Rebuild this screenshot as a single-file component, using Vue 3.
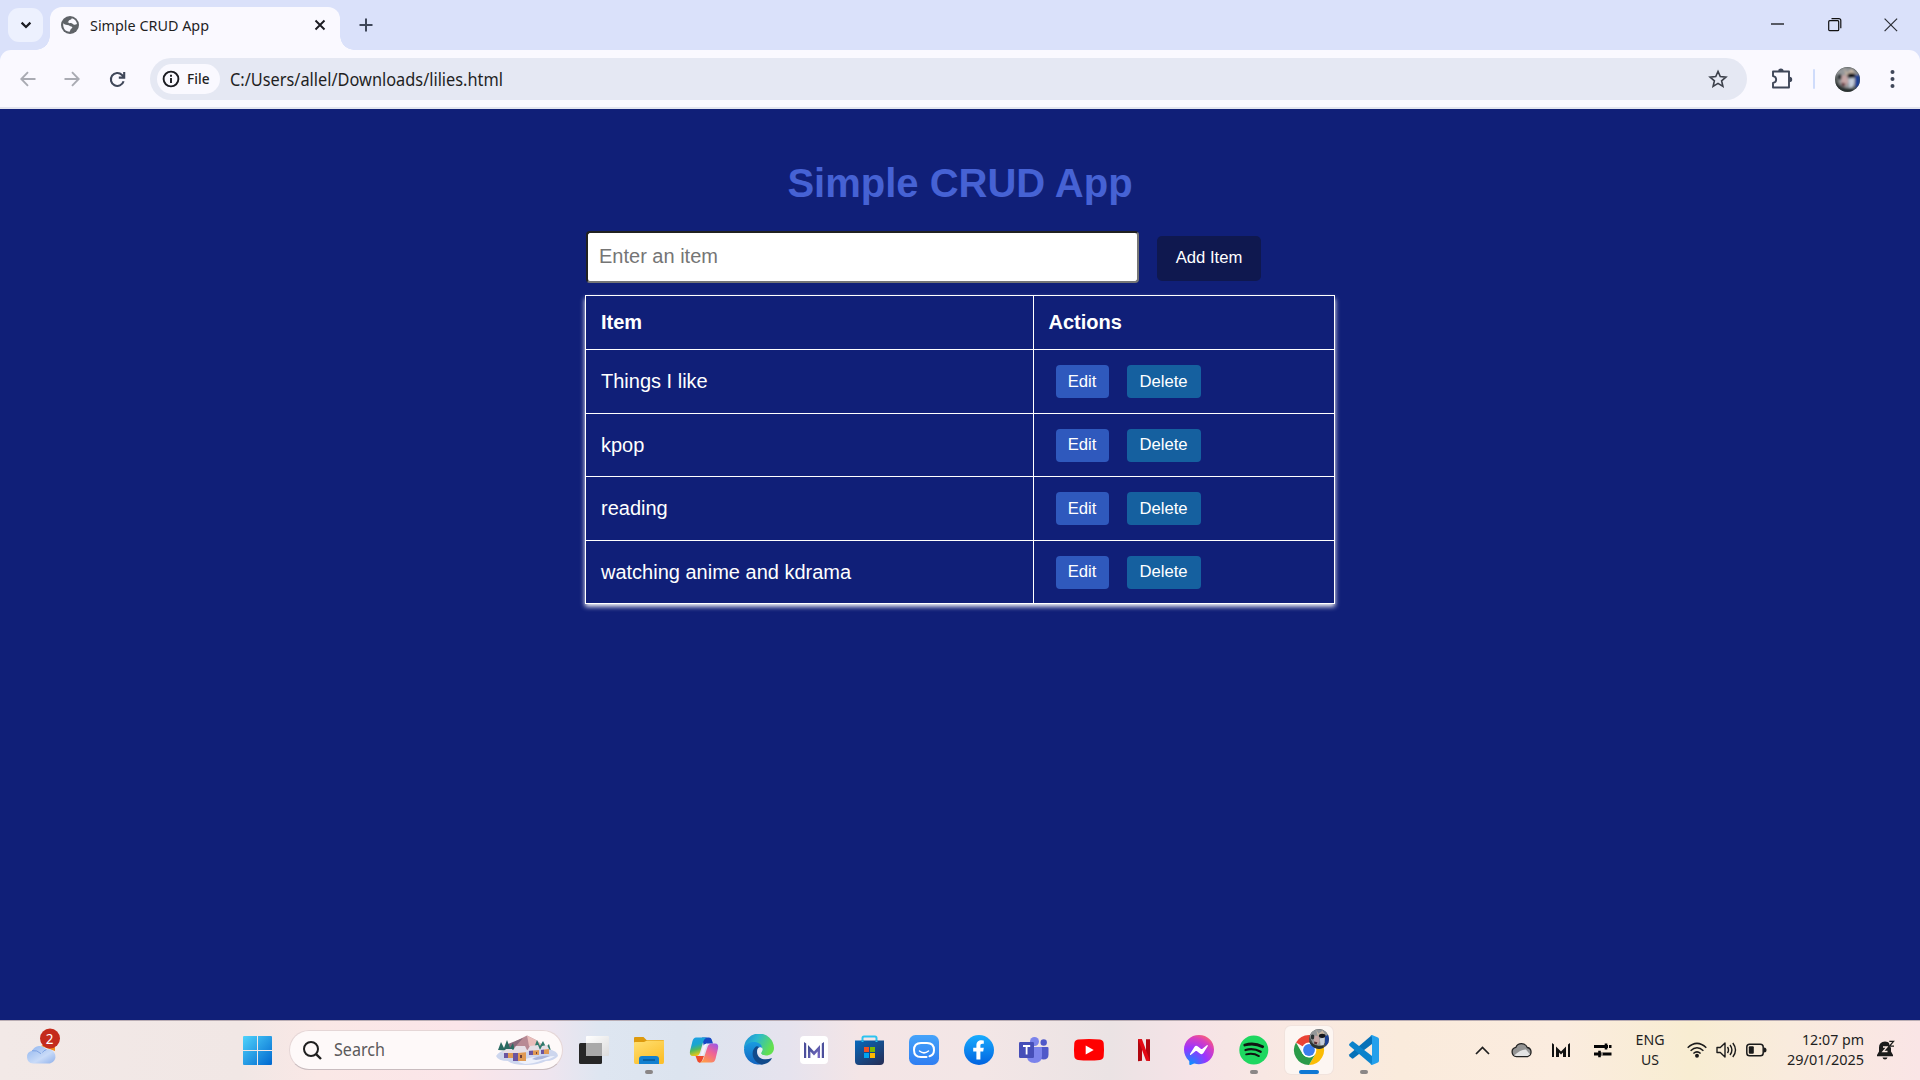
<script setup>
const rows = ['Things I like', 'kpop', 'reading', 'watching anime and kdrama']
</script>

<template>
  <div class="screen">
    <header class="tabstrip">
      <button class="tabsearch">
        <svg width="12" height="8" viewBox="0 0 12 8"><path d="M1.600 1.600 6 6l4.400-4.400" fill="none" stroke="#1b1c22" stroke-width="2.200" /></svg>
      </button>
      <div class="tab">
        <svg class="favicon" width="18" height="18" viewBox="0 0 18 18">
          <circle cx="9" cy="9" r="9" fill="#5f6368" />
          <path d="M2.200 7.200c1.700 1.700 3.600 1.500 5.400 2 .9.300 1.300 1.200 2.600 1.200 1.400.1 1.500 1.500.3 2-1 .4-1.100 1.900-1.900 3.300C4.500 15.600 1.800 12.500 2.200 7.200ZM10.800 2.200c-.4 1.300-1 1.500-2.200 1.800-1.200.4-.7 1.800-1.900 2 .2 1.200 1.300 1.200 2.900 1.100 1.800-.1 2.200 1.400 3.400 1.700 1.100.2 2-.3 3-.7C15.600 5 13.600 2.900 10.800 2.200Z" fill="#faf9ff" />
        </svg>
        <svg class="tabtitle" width="140" height="26"><text x="0" y="19" textLength="119" lengthAdjust="spacingAndGlyphs">Simple CRUD App</text></svg>
        <svg class="tabclose" width="12" height="12" viewBox="0 0 12 12"><path d="M1.500 1.500l9 9M10.500 1.500l-9 9" stroke="#1b1c22" stroke-width="1.900" /></svg>
      </div>
      <svg class="newtab" width="14" height="14" viewBox="0 0 14 14"><path d="M7 .5v13M.5 7h13" stroke="#3f4759" stroke-width="2" /></svg>
      <div class="winctl">
        <svg width="14" height="14" viewBox="0 0 14 14"><path d="M0 6h13" stroke="#000" stroke-width="1.200" /></svg>
        <svg width="14" height="14" viewBox="0 0 14 14" fill="none" stroke="#111"><rect x=".7" y="2.700" width="10" height="10" rx="1" stroke-width="1.200" /><path d="M3.500.6h7.300q2 0 2 2v7.600" stroke-width="1.200" /></svg>
        <svg width="14" height="14" viewBox="0 0 14 14"><path d="M.6.6l12.500 12.500M13.100.6.6 13.100" stroke="#2b2d35" stroke-width="1.200" /></svg>
      </div>
    </header>

    <div class="toolbar">
      <svg class="back" width="16" height="16" viewBox="0 0 16 16" fill="none" stroke="#a9abb3" stroke-width="1.900"><path d="M15.500 8H1.500M8 1.200 1.300 8 8 14.800" /></svg>
      <svg class="fwd" width="16" height="16" viewBox="0 0 16 16" fill="none" stroke="#a9abb3" stroke-width="1.900"><path d="M.5 8h14M8 1.200 14.700 8 8 14.800" /></svg>
      <svg class="reload" width="17" height="17" viewBox="0 0 17 17" fill="none" stroke="#3f4759" stroke-width="2.100"><path d="M14.600 10.300A6.500 6.500 0 1 1 13 3.900l2 2.100M15.200 1v5.600H9.800" /></svg>
      <div class="omnibox">
        <div class="chip">
          <svg width="18" height="18" viewBox="0 0 18 18"><circle cx="9" cy="9" r="7.400" fill="none" stroke="#1b1c22" stroke-width="1.900" /><path d="M9 8v5M9 4.800v2" stroke="#1b1c22" stroke-width="1.900" /></svg>
          <svg width="26" height="24"><text class="filetext" x="0" y="17" textLength="22.500" lengthAdjust="spacingAndGlyphs">File</text></svg>
        </div>
        <svg class="url" width="300" height="30"><text x="0" y="22" textLength="273" lengthAdjust="spacingAndGlyphs">C:/Users/allel/Downloads/lilies.html</text></svg>
        <svg class="star" width="20" height="20" viewBox="0 0 20 20"><path d="M10 2.400l2.250 5.200 5.650.5-4.300 3.700 1.300 5.550L10 14.400l-4.900 2.950 1.300-5.550L2.100 8.100l5.650-.5Z" fill="none" stroke="#3c404b" stroke-width="1.600" /></svg>
      </div>
      <svg class="puzzle" width="22" height="22" viewBox="0 0 22 22"><path d="M2 3.500h16v16H2v-4.600c4.200-.6 4.200-6.200 0-6.800Z" fill="none" stroke="#3f4759" stroke-width="1.900" stroke-linejoin="round" /><path d="M7.200 3.200a2.700 2.700 0 0 1 5.400 0ZM18.500 8.700a2.700 2.700 0 0 1 0 5.400Z" fill="#3f4759" /></svg>
      <i class="sep"></i>
      <svg class="avatar" width="25" height="25" viewBox="0 0 25 25">
        <defs><clipPath id="av"><circle cx="12.500" cy="12.500" r="12.500" /></clipPath>
          <filter id="soft"><feGaussianBlur stdDeviation=".8" /></filter></defs>
        <g clip-path="url(#av)">
          <rect width="25" height="25" fill="#4a504f" />
          <g id="catface" filter="url(#soft)">
            <path d="M1 4 9 0l9 1 6 6-1 8-5 4-6 3-7-4-4-8Z" fill="#94979a" />
            <path d="M9 1l3 5 5-4 3 5-9 2Z" fill="#c9b7a4" />
            <ellipse cx="16.500" cy="8.500" rx="4.200" ry="2.600" fill="#17191d" />
            <ellipse cx="4.500" cy="10" rx="2.300" ry="3" fill="#2a3234" />
            <path d="M7 8l5 1 1.500 6-2.500 4-5-3Z" fill="#c5a5a5" />
            <path d="M13.500 12l6-1-1 9-4 1Z" fill="#c4cddb" />
            <path d="M20 9l5-2v12l-5 2Z" fill="#1c3f94" />
            <path d="M6.500 15.500l4 1-1 3-3-1Z" fill="#5b2f35" />
            <path d="M0 15l7 5 5 1 6 0v4H0Z" fill="#2c3132" />
          </g>
        </g>
      </svg>
      <svg class="dots" width="5" height="20" viewBox="0 0 5 20" fill="#3f4759"><circle cx="2.500" cy="3" r="2" /><circle cx="2.500" cy="10" r="2" /><circle cx="2.500" cy="17" r="2" /></svg>
    </div>

    <main>
      <div class="container">
        <h1>Simple CRUD App</h1>
        <div class="form">
          <input type="text" placeholder="Enter an item" />
          <button class="add">Add Item</button>
        </div>
        <table>
          <thead><tr><th>Item</th><th>Actions</th></tr></thead>
          <tbody>
            <tr v-for="r in rows" :key="r">
              <td>{{ r }}</td>
              <td><div class="actions"><button class="edit">Edit</button><button class="delete">Delete</button></div></td>
            </tr>
          </tbody>
        </table>
      </div>
    </main>

    <footer>
      <svg class="weather" width="36" height="38" viewBox="0 0 36 38">
        <defs><linearGradient id="cl" x1="0" y1="0" x2="1" y2="1"><stop offset="0" stop-color="#8fb4ee" /><stop offset=".6" stop-color="#c9dbf8" /><stop offset="1" stop-color="#8fb0ea" /></linearGradient></defs>
        <path d="M15 18l8-4h6v9Z" fill="#f08a1c" />
        <path d="M7 35.500a6.500 6.500 0 0 1-1-12.800A8.500 8.500 0 0 1 20.500 21.500 6.800 6.800 0 1 1 24 35.500Z" fill="url(#cl)" />
        <path d="M6 22.700q5-1 9 3M20.500 21.500q-3 1-4 3" stroke="#7fa3e2" fill="none" />
        <circle cx="24" cy="10.500" r="10" fill="#c42b1c" />
        <text x="23.500" y="15.500" text-anchor="middle" class="badge">2</text>
      </svg>
      <svg class="win" width="29" height="29" viewBox="0 0 29 29">
        <defs><linearGradient id="wg" gradientUnits="userSpaceOnUse" x1="0" y1="0" x2="29" y2="29"><stop offset="0" stop-color="#4fd3fb" /><stop offset="1" stop-color="#0067cf" /></linearGradient></defs>
        <path d="M1 0h13v14H0V1Q0 0 1 0ZM15 0h13q1 0 1 1v13H15ZM0 15h14v14H1q-1 0-1-1ZM15 15h14v13q0 1-1 1H15Z" fill="url(#wg)" />
      </svg>
      <div class="search">
        <svg width="19" height="19" viewBox="0 0 19 19" fill="none" stroke="#1f1f1f" stroke-width="2"><circle cx="8" cy="8" r="7" /><path d="M12.800 12.800l5.200 5.200" stroke-width="2.400" /></svg>
        <svg class="stext" width="60" height="28"><text x="0" y="20" textLength="51" lengthAdjust="spacingAndGlyphs">Search</text></svg>
        <svg class="village" width="62" height="30" viewBox="0 0 62 30">
          <path d="M9 16 20 6 31 .5 40 5l10 8-8 7H18Z" fill="#b88a94" /><path d="M31 .5 40 5l10 8-11 1-6-3Z" fill="#e9bdba" /><path d="M12 9 27 3l-7 8-8 4Z" fill="#8a6a7c" />
          <path d="M2 15l3-8 3 6 3-8 3 8 3-5 2 8Z" fill="#2a6b62" /><path d="M38 13l3-8 3 6 3-5 3 6 3-3 2 7H38Z" fill="#2f7a6b" />
          <path d="M0 21q4-6 12-5l26-1 14-1q10 2 10 7-4 5-12 5-8 4-20 4-14 0-18-4-10 0-12-5Z" fill="#cdd6ee" />
          <path d="M22 27q10-5 20-5l17-1q-6 4-12 4-10 4-18 4Z" fill="#eef1fb" /><path d="M36 24q8-4 18-3-6 3-14 4Z" fill="#a9b4da" />
          <path d="M8 17h9v6H8ZM17 16h13v10H17ZM33 14h10v6H33ZM45 14h7v5h-7Z" fill="#6a55a0" />
          <path d="M12 17h5v6h-5ZM22 17h8v9h-8ZM37 14h6v6h-6ZM48 14h5v5h-5Z" fill="#e09a54" />
          <path d="M6 18l4-4 6 0 3 4ZM15 18l5-7 9 0 3 6-10 1ZM31 16l3-5 8-1 2 5ZM44 15l2-4 5-1 2 4Z" fill="#e6dfe6" />
          <path d="M24 20h2v3h-2ZM40 17h1v2h-1Z" fill="#6b3f3a" />
        </svg>
      </div>

      <nav class="apps">
        <div class="app">
          <svg viewBox="0 0 32 32"><defs><linearGradient id="tv" x2="1" y2="1"><stop stop-color="#fff" /><stop offset="1" stop-color="#dcdcdc" /></linearGradient></defs><rect x="1" y="9" width="23" height="21" rx="1.500" fill="#262626" /><rect x="8" y="2" width="23" height="20" rx="1" fill="url(#tv)" /><path d="M8 9h16v13H8Z" fill="#a9a9a9" /></svg>
        </div>
        <div class="app">
          <svg viewBox="0 0 32 32"><defs><linearGradient id="fo" x2=".6" y2="1"><stop stop-color="#ffdf72" /><stop offset="1" stop-color="#fcc02c" /></linearGradient></defs><path d="M1 4q0-1 1-1h8.500l3 3H30q1 0 1 1v5H1Z" fill="#dd9a0e" /><path d="M1 9q0-1 1-1h9l3-1.500H31V28q0 2-1.500 2h-27Q1 30 1 28Z" fill="url(#fo)" /><path d="M6 30v-5q0-3 3-3h14q3 0 3 3v5Z" fill="#1280d0" /><path d="M10 26h12" stroke="#075796" stroke-width="1.500" /></svg>
          <i class="dot"></i>
        </div>
        <div class="app">
          <svg viewBox="0 0 32 32"><defs>
            <linearGradient id="c1" x2=".3" y2="1"><stop stop-color="#1e9ee8" /><stop offset=".45" stop-color="#19a6cf" /><stop offset=".7" stop-color="#55b95b" /><stop offset="1" stop-color="#f2c811" /></linearGradient>
            <linearGradient id="c2" x1=".9" x2=".3" y2="1"><stop stop-color="#9a59e8" /><stop offset=".45" stop-color="#ee6298" /><stop offset="1" stop-color="#ff9a4a" /></linearGradient></defs>
            <path d="M14 3.500h7q2 0 2.700 2l1.300 4h-6q-2 0-3 3Z" fill="#1549c4" />
            <path d="M8 3.500h11q-3 1-4 5l-3 10q-1.200 3.500-4 3.500H5q-4 0-3-5L4.500 7q1-3.500 3.500-3.500Z" fill="url(#c1)" />
            <path d="M10 22h6l-2 5q-1.500 2.500-3 1.500-1.500-.5-2-2.500l-1.500-4.200Z" fill="#ee4b2b" />
            <path d="M24 9.500h3q4 0 3 5L27.500 25q-1 3.500-4 3.500H12q3-1 4-5l3.500-10.500q1-3.500 4.500-3.500Z" fill="url(#c2)" />
            <path d="M15 12q1-2.500 4-2.500l-3.500 10.800q-.6 1.700-3 1.700Z" fill="#f5f1fb" />
          </svg>
        </div>
        <div class="app">
          <svg viewBox="0 0 32 32"><defs>
            <linearGradient id="e1" x1="0" x2="1" y2=".4"><stop stop-color="#1b87d6" /><stop offset=".45" stop-color="#2bb8cf" /><stop offset="1" stop-color="#63e04f" /></linearGradient>
            <linearGradient id="e2" x2="0" y2="1"><stop stop-color="#1a9be0" /><stop offset="1" stop-color="#1364c0" /></linearGradient></defs>
            <path d="M1 15A15 15 0 0 1 31 14c0 5-4 7.500-8 7.500-3.500 0-6-1.500-4.500-3.500 2-2.500 1-6.500-3.500-6.500C9 11.500 4 11 1 15Z" fill="url(#e1)" />
            <path d="M1 15.500c1-5 5-7.500 10-7.500 4.500 0 8 2.500 8 6-6-2-9.500 3-7.500 8 1.500 4 5.500 7 10 7.500A15 15 0 0 1 1 15.500Z" fill="url(#e2)" />
            <path d="M13 12.500c-6 4.500-4 15.500 5.500 18 5 0 9-3 10.500-6.500-7 3-15 1-15-6.500q0-3 2-4.500-1.500-1-3-.5Z" fill="#114a8b" />
            <path d="M14.500 16.500q.5-3.500 3.500-3 2.500 1 .5 4.500-1.500 2 1.500 3.200-4 .6-5.500-4.700Z" fill="#e8eef6" />
          </svg>
        </div>
        <div class="app">
          <svg viewBox="0 0 32 32"><defs><linearGradient id="mg" x2="1" y2="1"><stop stop-color="#3b4a8c" /><stop offset="1" stop-color="#7d6cc9" /></linearGradient></defs><rect x="2" y="2" width="28" height="28" rx="4" fill="#fff" /><g fill="#4c4f9c"><path d="M6 8l2.200 1.500V24H6ZM26 8l-2.200 1.500V24H26Z" /><path d="M10 24V11l6 6.500 6-6.500v13h-2.400v-6.500L16 21.500l-3.600-4V24Z" fill="url(#mg)" /></g></svg>
        </div>
        <div class="app">
          <svg viewBox="0 0 32 32"><defs><linearGradient id="st" x2=".8" y2="1"><stop stop-color="#0869bd" /><stop offset="1" stop-color="#24315c" /></linearGradient></defs><path d="M9.500 8V4q0-1.500 1.500-1.500h11q1.500 0 1.500 1.500v4" fill="none" stroke="#2cc3f0" stroke-width="2" /><path d="M2 6.500h29V27q0 4-4 4H6q-4 0-4-4Z" fill="url(#st)" /><path d="M9.500 6.500v1.500M23.500 6.500v1.500" stroke="#2cc3f0" stroke-width="2" /><path d="M11 13h5v5h-5Z" fill="#f25022" /><path d="M17 13h5v5h-5Z" fill="#7fba00" /><path d="M11 19h5v5h-5Z" fill="#00a4ef" /><path d="M17 19h5v5h-5Z" fill="#ffb900" /></svg>
        </div>
        <div class="app">
          <svg viewBox="0 0 32 32"><defs><linearGradient id="zz" y2="1" x2="0"><stop stop-color="#45a3fa" /><stop offset="1" stop-color="#2f7ef2" /></linearGradient></defs><rect x="1" y="1" width="30" height="30" rx="6.500" fill="url(#zz)" /><path d="M21.500 22.200q4.500-1.200 4.500-6.200 0-7-7-7h-6q-7 0-7 7t7 7h5.500" fill="none" stroke="#fff" stroke-width="2" stroke-linecap="round" /><path d="M11.500 17q4.500 3.800 9 0" fill="none" stroke="#fff" stroke-width="1.500" stroke-linecap="round" /></svg>
        </div>
        <div class="app">
          <svg viewBox="0 0 32 32"><defs><linearGradient id="fb" x2="0" y2="1"><stop stop-color="#18acfe" /><stop offset="1" stop-color="#0163e0" /></linearGradient></defs><circle cx="16" cy="16" r="15" fill="url(#fb)" /><path d="M13.400 25.500V17.500H10.200v-3.800h3.200v-2.300c0-3.600 2.200-5.200 4.800-5.200 1.300 0 2.600.3 2.600.3v3.200h-1.500c-1.500 0-1.900.9-1.900 1.900v2.100h3.400l-.6 3.800h-2.800v8Z" fill="#fff" /></svg>
        </div>
        <div class="app">
          <svg viewBox="0 0 32 32"><circle cx="16.500" cy="7.500" r="4.500" fill="#7b83eb" /><circle cx="25.700" cy="8.500" r="3.200" fill="#5059c9" /><path d="M22 13h7.500q1 0 1 1v6.500q0 5-5 5-3.500 0-5-3Z" fill="#5059c9" /><path d="M10 13h13q1 0 1 1v8q0 7-7.500 7T9 22v-8q0-1 1-1Z" fill="#7b83eb" /><rect x="1" y="8" width="15" height="16" rx="1.200" fill="#464eb8" /><path d="M5 12h7.200M8.600 12v8.500" stroke="#fff" stroke-width="1.800" /></svg>
        </div>
        <div class="app">
          <svg viewBox="0 0 32 32"><path d="M5 5.600q11-1 22 0 3.300.4 3.700 3.700.6 6.700 0 13-.4 3.300-3.700 3.700-11 1-22 0-3.300-.4-3.700-3.700-.6-6.700 0-13 .4-3.300 3.700-3.700Z" fill="#f00" /><path d="M12.700 11.500v9l8-4.500Z" fill="#fff" /></svg>
        </div>
        <div class="app">
          <svg viewBox="0 0 32 32"><path d="M10 5.200h4v21.500l-4 .5ZM18 5.200h4V27l-4-.5Z" fill="#b1060f" /><path d="M10 5.200h4L22 27l-4-.5Z" fill="#e50914" /></svg>
        </div>
        <div class="app">
          <svg viewBox="0 0 32 32"><defs><radialGradient id="ms" cx=".2" cy="1" r="1.150"><stop stop-color="#0095ff" /><stop offset=".5" stop-color="#9a34ff" /><stop offset=".8" stop-color="#d93fbd" /><stop offset="1" stop-color="#ff6a68" /></radialGradient></defs><path d="M16 1C7.500 1 1 7.200 1 15.600c0 4.400 1.800 8.200 4.700 10.800q.5.500.6 1.200v2.700q.1 1 1.200.7l3-1.300q.5-.2 1-.1 2.200.6 4.500.6c8.500 0 15-6.200 15-14.600S24.500 1 16 1Z" fill="url(#ms)" /><path d="m7 19.900 4.400-7q1.400-1.700 3.200-.6l3.500 2.600q.5.400 1 0l4.700-3.600q1.200-.6 1 .8l-4.400 7q-1.300 1.700-3.200.6l-3.500-2.600q-.5-.4-1 0L8 20.700q-1.300.6-1-.8Z" fill="#fff" /></svg>
        </div>
        <div class="app">
          <svg viewBox="0 0 32 32"><circle cx="15.800" cy="16" r="14.500" fill="#1ed760" /><g fill="none" stroke="#101512" stroke-linecap="round"><path d="M6.800 11q9.500-2.700 17.900 1.700" stroke-width="2.800" /><path d="M7.500 16q8-2.300 15.200 1.800" stroke-width="2.300" /><path d="M8.200 20.400q7-1.800 12.700 1.700" stroke-width="1.900" /></g></svg>
          <i class="dot"></i>
        </div>
        <div class="app active">
          <svg viewBox="0 0 32 32"><path d="M16 16 3 8.500A15 15 0 0 1 29 8.500H16Z" fill="#ea4335" /><path d="M16 16 16 8.500H29A15 15 0 0 1 16 31l6.500-11Z" fill="#fbbc04" /><path d="M3 8.500 9.500 19.800Q13 24 18 23.200l4.500-3.400L16 31A15 15 0 0 1 3 8.500Z" fill="#2a9a48" /><circle cx="16" cy="16" r="7.400" fill="#fff" /><circle cx="16" cy="16" r="5.900" fill="#3b7ded" /></svg>
          <svg class="mini" viewBox="0 0 25 25"><g clip-path="url(#av)"><rect width="25" height="25" fill="#4a504f" /><use href="#catface" /></g></svg>
          <i class="dot wide"></i>
        </div>
        <div class="app">
          <svg viewBox="0 0 32 32"><path d="M24 1v9L5.500 24.300q-1 .7-1.800 0L1.500 22.300q-1-1 0-2Z" fill="#0671b8" /><path d="M24 31v-9L5.500 7.700q-1-.7-1.800 0L1.500 9.700q-1 1 0 2Z" fill="#0c83cc" /><path d="M22.500 30.500Q24 30 24 28V4q0-2-1.500-2.500L24 1l6 2.600q1 .5 1 1.600v21.600q0 1.100-1 1.600L24 31Z" fill="#24a0ec" /></svg>
          <i class="dot"></i>
        </div>
      </nav>

      <div class="tray">
        <svg class="t1" width="15" height="9" viewBox="0 0 15 9"><path d="M1 8l6.500-6.500L14 8" fill="none" stroke="#1f1f1f" stroke-width="1.700" /></svg>
        <svg class="t2" width="22" height="16" viewBox="0 0 22 16"><path d="M5.500 14.500A4.600 4.600 0 0 1 4.800 5.400 6.300 6.300 0 0 1 16.300 5.500a4.600 4.600 0 0 1 .2 9Z" fill="#949494" stroke="#222" stroke-width="1.300" /><path d="M3 13.500Q10 7 15 7.500l4 5-2.500 1.400h-11Z" fill="#e4e4e4" /></svg>
        <svg class="t3" width="18" height="14" viewBox="0 0 18 14" fill="#111"><path d="M0 0l2 1.500V14H0ZM18 0l-2 1.500V14h2ZM4 14V3.500l5 5 5-5V14h-3V9.500l-2 2-2-2V14Z" /></svg>
        <svg class="t4" width="18" height="15" viewBox="0 0 18 15"><path d="M0 3.500h17.500M0 11h17.500" stroke="#050505" stroke-width="3" /><path d="M12 .5v6M5.500 7.700v6.600" stroke="#050505" stroke-width="2.600" /><path d="M14.500 2v3M8 9.500v3" stroke="#faecdd" stroke-width="1" /></svg>
        <svg class="lang" width="34" height="44" text-anchor="middle"><text x="17" y="17" textLength="29" lengthAdjust="spacingAndGlyphs">ENG</text><text x="17" y="37" textLength="18" lengthAdjust="spacingAndGlyphs">US</text></svg>
        <svg class="t5" width="20" height="16" viewBox="0 0 20 16" fill="none" stroke="#1b1b1b" stroke-width="1.500"><path d="M.7 5.800Q10-3 19.300 5.800M3.600 8.700Q10 2.700 16.400 8.700M6.400 11.500q3.600-3.300 7.200 0" /><circle cx="10" cy="13.800" r="1.200" fill="#1b1b1b" /></svg>
        <svg class="t6" width="21" height="18" viewBox="0 0 21 18" fill="none" stroke="#1b1b1b" stroke-width="1.400"><path d="M1 6.500h3.300L9 2v14l-4.700-4.500H1Z" stroke-linejoin="round" /><path d="M11.500 6q2 3 0 6M14 4q3.800 5 0 10M16.800 2q5.400 7 0 14" /></svg>
        <svg class="t7" width="21" height="14" viewBox="0 0 21 14"><rect x=".8" y="1.300" width="16.400" height="11.400" rx="2.800" fill="none" stroke="#1b1b1b" stroke-width="1.500" /><rect x="2.800" y="3.300" width="5" height="7.500" rx="1" fill="#1b1b1b" /><path d="M18 4.500q2.500 0 2.500 2.500T18 9.500Z" fill="#1b1b1b" /></svg>
        <svg class="clock" width="82" height="44" text-anchor="end"><text x="80" y="17" textLength="62" lengthAdjust="spacingAndGlyphs">12:07 pm</text><text x="80" y="37" textLength="77" lengthAdjust="spacingAndGlyphs">29/01/2025</text></svg>
        <svg class="t8" width="18" height="20" viewBox="0 0 18 20"><path d="M8 1.500q6 .5 6 6v4l2 3.500v1.200H0V15l2-3.500v-4q0-5.500 6-6ZM5.500 17.500h5q-.5 2-2.500 2t-2.500-2Z" fill="#1b1b1b" /><path d="M6 7h4L6 11.500h4.500" fill="none" stroke="#fbeae3" stroke-width="1.300" /><path d="M11.500.3h6.500v7h-5Z" fill="#faeae3" /><path d="M12.300 1.300h4.200l-4 4.800h4.500" fill="none" stroke="#1b1b1b" stroke-width="1.300" /></svg>
      </div>
    </footer>
  </div>
</template>

<style>
body { background: #101f78; overflow: hidden; }
</style>

<style scoped>
.screen { width: 1920px; height: 1080px; display: flex; flex-direction: column; background: #dae1fa; font-family: "Noto Sans", sans-serif; overflow: hidden; }
.screen * { box-sizing: border-box; }
svg { display: block; flex: none; }
button { border: 0; padding: 0; }
text { fill: #1f1f1f; font-family: "Noto Sans", "Open Sans", sans-serif; }

.tabstrip { height: 50px; flex: none; display: flex; background: #dae1fa; padding-left: 8px; }
.tabsearch { width: 35px; height: 34px; margin-top: 8px; border-radius: 11px; background: #edf1fe; display: flex; align-items: center; justify-content: center; }
.tab { position: relative; width: 290px; height: 43px; margin: 7px 0 0 7px; background: #faf9ff; border-radius: 12px 12px 0 0; display: flex; align-items: center; padding: 0 14px 7px 11px; }
.tab::before, .tab::after { content: ""; position: absolute; bottom: 0; width: 14px; height: 14px; }
.tab::before { left: -14px; background: radial-gradient(circle at 0 0, transparent 13.500px, #faf9ff 14px); }
.tab::after { right: -14px; background: radial-gradient(circle at 100% 0, transparent 13.500px, #faf9ff 14px); }
.tabtitle { margin-left: 11px; }
.tabtitle text { font-size: 15px; }
.tabclose { margin-left: auto; }
.newtab { margin: 18px 0 0 19px; }
.winctl { margin: 18px 22px 0 auto; display: flex; gap: 42.500px; }

.toolbar { height: 59px; flex: none; display: flex; align-items: center; padding: 1px 25.500px 0 19.500px; background: #faf9ff; border-bottom: 2px solid #e2e4ee; border-radius: 11px 11px 0 0; }
.fwd { margin-left: 28.500px; }
.reload { margin-left: 29px; }
.omnibox { width: 1597px; height: 42px; margin-left: 24px; border-radius: 21px; background: #e5e8f3; display: flex; align-items: center; padding: 0 19px 0 7px; }
.chip { width: 63px; height: 30px; border-radius: 15px; background: #faf9ff; display: flex; align-items: center; padding-left: 5px; gap: 7px; }
.filetext { font-size: 15px; font-weight: 500; }
.url { margin-left: 10px; }
.url text { font-size: 17.500px; }
.star { margin-left: auto; }
.puzzle { margin-left: 24px; }
.sep { width: 2px; height: 20px; margin-left: 20px; border-radius: 1px; background: #cfdcfb; }
.avatar { margin-left: 20px; }
.dots { margin-left: auto; }

main { flex: 1; background: #101f78; color: #fff; font-family: "Liberation Sans", Arial, sans-serif; }
.container { width: 750px; margin: 0 auto; padding-top: 51px; }
h1 { margin: 0 0 25px; font-size: 40px; line-height: 46px; text-align: center; color: #4662d4; }
.form { display: flex; align-items: flex-start; height: 64px; }
input { width: 553px; height: 52px; margin-left: 1px; padding: 0 11px 2px 11px; font: 20px "Liberation Sans", Arial, sans-serif; border: 2px inset #767676; border-radius: 4px; background: #fff; }
input::placeholder { color: #757575; }
.add { width: 104px; height: 45px; margin: 5px 0 0 18px; padding-bottom: 2px; border-radius: 5px; background: #0f184f; }
button { color: #fff; font: 16.670px "Liberation Sans", Arial, sans-serif; }
table { width: 750px; table-layout: fixed; border-collapse: collapse; font-size: 20px; box-shadow: 0 2.500px 5px #fff; background: #101f78; }
th, td { border: 1px solid #fff; padding: 0 15px; text-align: left; height: 63.500px; }
td { padding-top: 1px; }
th { height: 54px; }
th:first-child { width: 447.500px; }
.actions { display: flex; gap: 18px; padding-left: 7px; }
.edit, .delete { height: 33px; border-radius: 4px; }
.edit { width: 53px; background: #2f59bd; }
.delete { width: 74px; background: #15609f; }

footer { height: 60px; flex: none; display: flex; align-items: center; border-top: 1px solid #b9adb4; padding: 0 0 1px 25.500px;
  background: linear-gradient(90deg, #f2e9e7 0, #f1e7e5 240px, #fae8e6 320px, #fbe5e9 460px, #eee5ef 550px, #dee6f1 600px, #dce4ef 680px, #e6e3ee 790px, #f4e5e6 860px, #f3e6e6 980px, #ebe3e4 1110px, #f6e3e7 1190px, #f9e9e1 1300px, #faebdc 1400px, #fbecdf 1560px, #f8edd2 1690px, #f9ebdd 1790px, #fae5e6 1920px); }
.weather { align-self: flex-start; margin-top: 7px; }
.badge { fill: #fff; font-size: 13.500px; }
.win { margin-left: 181.500px; }
.search { width: 274px; height: 40px; margin-left: 17px; border-radius: 20px; border: 1px solid #e5d6d6; border-bottom-color: #c9bcbf; background: #fef9f9; display: flex; align-items: center; padding: 0 4px 0 13px; }
.stext { margin-left: 12px; }
.stext text { font-size: 17.500px; fill: #5c5a5b; }
.village { margin-left: auto; }
.apps { display: flex; margin-left: 3px; }
.app { position: relative; width: 55px; height: 58px; display: flex; align-items: center; justify-content: center; }
.app > svg { width: 32px; height: 32px; position: relative; }
.active::before { content: ""; position: absolute; left: 3.500px; top: 5px; width: 48px; height: 48px; border-radius: 6px; background: #fdf6f2; box-shadow: 0 0 0 1px #f1e3dd; }
.app > .mini { position: absolute; width: 20px; height: 20px; left: 28px; top: 8px; }
.dot { position: absolute; bottom: 5px; left: 23.500px; width: 8px; height: 4px; border-radius: 2px; background: #8a8686; }
.wide { left: 17.500px; width: 20px; background: #0f78d4; }
.tray { display: flex; align-items: center; margin-left: 84px; }
.tray text { font-size: 15px; }
.t2 { margin-left: 21px; }
.t3 { margin-left: 19px; }
.t4 { margin-left: 24px; }
.lang { margin-left: 21px; }
.t5 { margin-left: 20px; }
.t6 { margin-left: 9px; }
.t7 { margin-left: 9px; }
.clock { margin-left: 17px; }
.t8 { margin-left: 11px; }
</style>
